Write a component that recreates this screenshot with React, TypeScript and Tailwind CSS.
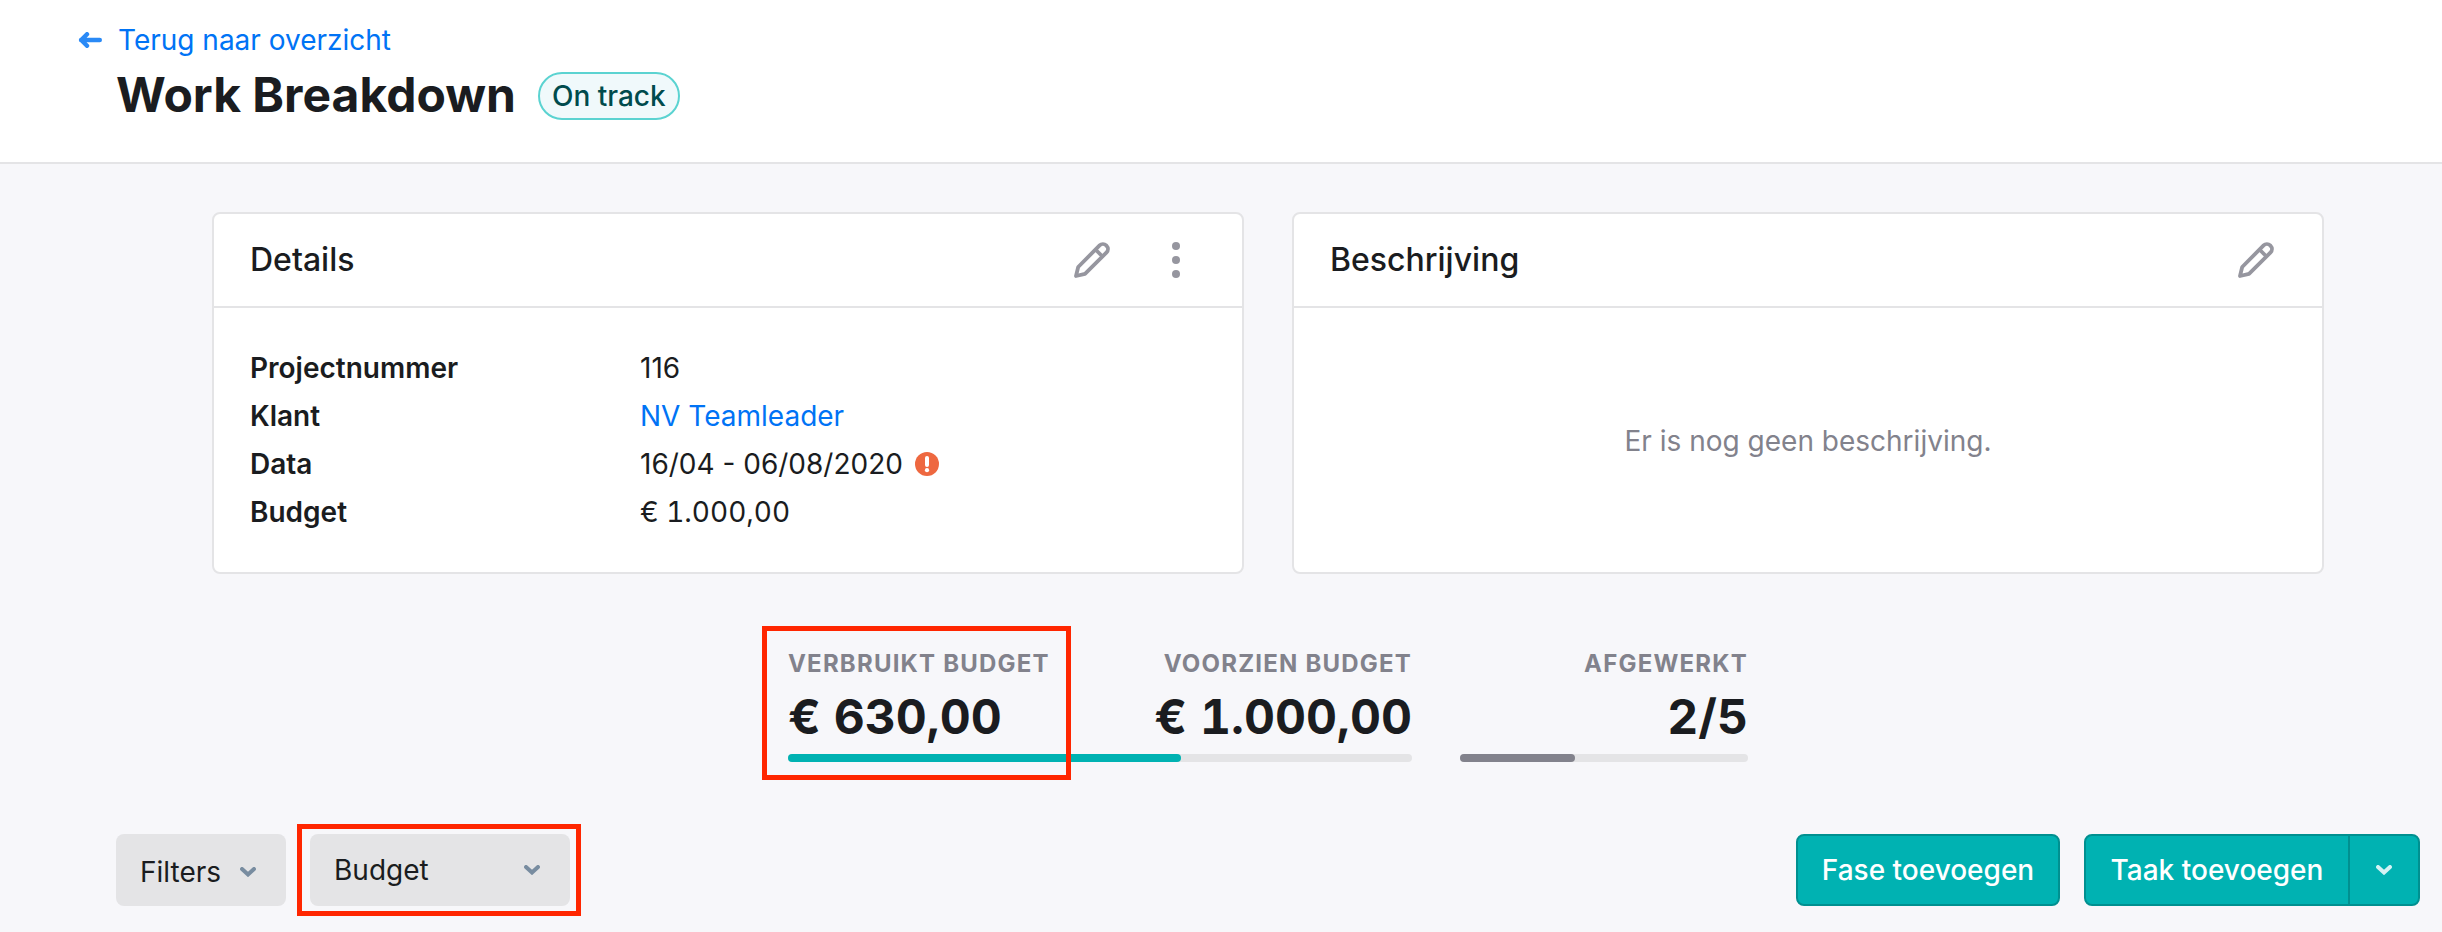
import type { ReactNode } from "react";

function Pencil() {
  return (
    <svg width="36" height="36" viewBox="0 0 36 36" fill="none" stroke="#96969f" strokeWidth="3.8" strokeLinejoin="round">
      <path d="M2 34 L4.2 25 L25.6 3.4 a4.7 4.7 0 0 1 6.6 0 l.4 .4 a4.7 4.7 0 0 1 0 6.6 L11 31.8 Z" />
      <path d="M21.5 7.5 L28.5 14.5" />
    </svg>
  );
}

function Chevron({ className }: { className: string }) {
  return (
    <svg width="16" height="10" viewBox="0 0 16 10" fill="none" strokeWidth="4" strokeLinecap="round" strokeLinejoin="miter" className={className}>
      <path d="M2 2 L8 7.5 L14 2" />
    </svg>
  );
}

function Card({ title, actions, children }: { title: string; actions: ReactNode; children: ReactNode }) {
  return (
    <section className="flex flex-1 flex-col rounded-lg border-2 border-[#e4e4e6] bg-white">
      <header className="flex items-center justify-between border-b-2 border-[#e4e4e6] py-4 pr-9 pl-9">
        <h2 className="text-[32px] leading-[60px] font-medium">{title}</h2>
        <div className="flex items-center gap-6">{actions}</div>
      </header>
      {children}
    </section>
  );
}

function IconButton({ label, children }: { label: string; children: ReactNode }) {
  return (
    <button type="button" aria-label={label} className="flex size-[60px] items-center justify-center">
      {children}
    </button>
  );
}

function Row({ label, children }: { label: string; children: ReactNode }) {
  return (
    <div className="flex leading-[48px]">
      <dt className="w-[390px] font-semibold">{label}</dt>
      <dd className="flex items-center gap-3">{children}</dd>
    </div>
  );
}

function Bar({ value, label, className }: { value: number; label: string; className: string }) {
  return (
    <div role="progressbar" aria-label={label} aria-valuenow={value} className="mt-0.5 h-2 rounded-full bg-[#e4e4e6]">
      <div className={`h-2 rounded-full ${className}`} style={{ width: `${value}%` }} />
    </div>
  );
}

function Stat({ label, value, className }: { label: string; value: string; className: string }) {
  return (
    <div className={className}>
      <div className="text-2xl leading-[36px] font-bold tracking-wider text-[#82828c]">{label}</div>
      <div className="text-5xl leading-[70px] font-bold tabular-nums [font-optical-sizing:none]">{value}</div>
    </div>
  );
}

export default function App() {
  return (
    <div className="min-h-screen bg-[#f7f7fa] font-['Inter',sans-serif] text-[28px] text-[#1a1c20]">
      <header className="border-b-2 border-[#e4e4e6] bg-white pt-4 pb-[34px] pl-[78px]">
        <a href="#overzicht" className="inline-flex items-center gap-4 leading-[48px] text-[#0073f5]">
          <svg width="24" height="16" viewBox="0 0 24 16" fill="none" stroke="#2a8af6" strokeWidth="4.4" strokeLinecap="round" strokeLinejoin="round">
            <path d="M21.8 8 H3 M9 2.2 L3.2 8 L9 13.8" />
          </svg>
          Terug naar overzicht
        </a>
        <div className="flex items-center gap-[22px] pl-[38px]">
          <h1 className="pb-0.5 text-5xl leading-[62px] font-bold">Work Breakdown</h1>
          <span className="rounded-full border-2 border-[#5bd3d1] bg-[#f0f9fb] px-3 leading-[44px] font-medium text-[#004b4d]">On track</span>
        </div>
      </header>

      <main className="pt-12 pr-[22px] pl-[116px]">
        <div className="mx-auto flex max-w-[2112px] gap-12">
          <Card
            title="Details"
            actions={
              <>
                <IconButton label="Details bewerken"><Pencil /></IconButton>
                <IconButton label="Meer acties">
                  <svg width="8" height="36" viewBox="0 0 8 36" fill="#96969f">
                    <circle cx="4" cy="4" r="4" />
                    <circle cx="4" cy="18" r="4" />
                    <circle cx="4" cy="32" r="4" />
                  </svg>
                </IconButton>
              </>
            }
          >
            <dl className="p-9">
              <Row label="Projectnummer">116</Row>
              <Row label="Klant"><a href="#klant" className="text-[#0073f5]">NV Teamleader</a></Row>
              <Row label="Data">
                16/04 - 06/08/2020
                <svg width="24" height="24" viewBox="0 0 24 24" role="img" aria-label="Te laat">
                  <circle cx="12" cy="12" r="12" fill="#ee6840" />
                  <path d="M12 6 V13" stroke="#fff" strokeWidth="4" strokeLinecap="round" />
                  <circle cx="12" cy="18.2" r="2.1" fill="#fff" />
                </svg>
              </Row>
              <Row label="Budget"><span className="tabular-nums">€ 1.000,00</span></Row>
            </dl>
          </Card>
          <Card title="Beschrijving" actions={<IconButton label="Beschrijving bewerken"><Pencil /></IconButton>}>
            <p className="flex flex-1 items-center justify-center pt-0.5 text-[#82828c]">Er is nog geen beschrijving.</p>
          </Card>
        </div>

        <div className="mt-[72px] flex justify-center gap-12">
          <div className="relative w-[624px]">
            <div className="flex justify-between">
              <Stat label="VERBRUIKT BUDGET" value="€ 630,00" className="" />
              <Stat label="VOORZIEN BUDGET" value="€ 1.000,00" className="text-right" />
            </div>
            <Bar value={63} label="Verbruikt budget" className="bg-[#00b2b2]" />
            <div className="absolute -top-5 -left-[26px] h-[154px] w-[309px] border-[5px] border-[#ff2600]" />
          </div>
          <div className="w-[288px]">
            <Stat label="AFGEWERKT" value="2/5" className="text-right" />
            <Bar value={40} label="Afgewerkt" className="bg-[#82828c]" />
          </div>
        </div>

        <div className="mt-[72px] flex items-center justify-between pb-6">
          <div className="flex items-center gap-6">
            <button type="button" className="flex h-[72px] w-[170px] items-center justify-between rounded-lg bg-[#e4e4e6] pt-1 pr-[30px] pl-6">
              Filters
              <Chevron className="stroke-[#788ca0]" />
            </button>
            <div className="relative">
              <button type="button" className="flex h-[72px] w-[260px] items-center justify-between rounded-lg bg-[#e4e4e6] pr-[30px] pl-6">
                Budget
                <Chevron className="stroke-[#788ca0]" />
              </button>
              <div className="pointer-events-none absolute -top-[10px] -right-[11px] -bottom-[10px] -left-[13px] border-[5px] border-[#ff2600]" />
            </div>
          </div>
          <div className="flex gap-6 font-medium text-white">
            <button type="button" className="h-[72px] w-[264px] rounded-lg border-2 border-[#009090] bg-[#00b2b2]">Fase toevoegen</button>
            <div className="flex h-[72px] w-[336px] rounded-lg border-2 border-[#009090] bg-[#00b2b2]">
              <button type="button" className="flex-1">Taak toevoegen</button>
              <button type="button" aria-label="Meer opties" className="flex w-[70px] items-center justify-center border-l-2 border-[#009090]">
                <Chevron className="stroke-[#d4f2f4]" />
              </button>
            </div>
          </div>
        </div>
      </main>
    </div>
  );
}
